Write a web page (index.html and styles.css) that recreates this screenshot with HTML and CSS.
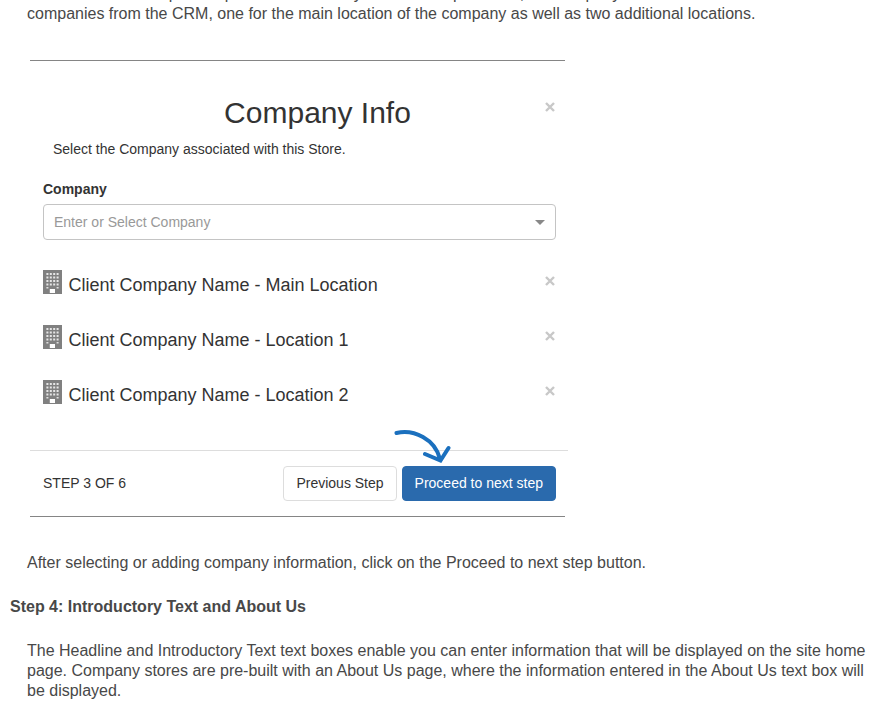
FILE: index.html
```html
<!DOCTYPE html>
<html lang="en">
<head>
    <meta charset="UTF-8">
    <meta name="viewport" content="width=device-width, initial-scale=1.0">
    <title>Company Store Setup</title>
    <link rel="stylesheet" href="styles.css">
</head>
<body>
<svg width="0" height="0" class="symbols">
    <symbol id="building" viewBox="0 0 19 24">
        <path fill="#808080" d="M0 0h19v24h-19z"/>
        <path stroke="#e6e6e6" stroke-width="2" stroke-dasharray="2 1.4" d="M3.4 4h12.4M3.4 7.5h12.4M3.4 11h12.4M3.4 14.5h12.4"/>
        <path fill="#ddd" d="M3.4 17h2v1.6h-2zM13.6 17h2v1.6h-2z"/>
        <path fill="#fff" d="M6.8 19h5.2v4h-5.2z"/>
    </symbol>
    <symbol id="close" viewBox="0 0 10 10">
        <path stroke="#c8c8c8" stroke-width="2.4" d="M1 1l8 8M9 1l-8 8"/>
    </symbol>
</svg>

<p class="intro">You can select multiple companies if necessary. In the example below, the company has been associated with three companies from the CRM, one for the main location of the company as well as two additional locations.</p>

<div class="modal">
    <div class="modal-header">
        <h2>Company Info</h2>
        <svg class="close"><use href="#close"/></svg>
    </div>
    <div class="modal-body">
        <p class="hint">Select the Company associated with this Store.</p>
        <div class="label">Company</div>
        <div class="select">
            <span>Enter or Select Company</span>
            <span class="caret"></span>
        </div>
        <ul class="companies">
            <li>
                <svg class="building"><use href="#building"/></svg>
                <span class="name">Client Company Name - Main Location</span>
                <svg class="close"><use href="#close"/></svg>
            </li>
            <li>
                <svg class="building"><use href="#building"/></svg>
                <span class="name">Client Company Name - Location 1</span>
                <svg class="close"><use href="#close"/></svg>
            </li>
            <li>
                <svg class="building"><use href="#building"/></svg>
                <span class="name">Client Company Name - Location 2</span>
                <svg class="close"><use href="#close"/></svg>
            </li>
        </ul>
    </div>
    <div class="modal-footer">
        <span class="step">STEP 3 OF 6</span>
        <button class="btn">Previous Step</button>
        <button class="btn primary">Proceed to next step</button>
        <svg class="arrow" viewBox="0 0 60 36">
            <path d="M3.500 5C21 1 42 11 47 31M32 26L47.500 32.500L55.500 20"/>
        </svg>
    </div>
</div>

<p class="after">After selecting or adding company information, click on the Proceed to next step button.</p>
<h3>Step 4: Introductory Text and About Us</h3>
<p>The Headline and Introductory Text text boxes enable you can enter information that will be displayed on the site home page. Company stores are pre-built with an About Us page, where the information entered in the About Us text box will be displayed.</p>
</body>
</html>
```
FILE: styles.css
```css
html {
    overflow: hidden;
}

body {
    margin: 0;
    padding: 0 24px 0 27px;
    font-family: "Liberation Sans", Arial, sans-serif;
    font-size: 16px;
    line-height: 20px;
    color: #484848;
    background: #fff;
}

p {
    margin: 0;
}

.symbols {
    display: block;
}

/* first line is scrolled partly out of view */
.intro {
    margin-top: -16px;
}

.modal {
    width: 535px;
    margin: 36px 0 0 3px;
    border-top: 1px solid #858585;
    border-bottom: 1px solid #858585;
    font-size: 14px;
    color: #333;
}

.modal-header {
    display: flex;
    align-items: flex-start;
    padding: 34px 10px 0 20px;
}

.modal-header h2 {
    flex: 1;
    margin: 0;
    padding-left: 40px;
    font-size: 30px;
    font-weight: normal;
    line-height: 36px;
    text-align: center;
}

.modal-header .close {
    margin-top: 7px;
}

.close {
    width: 10px;
    height: 10px;
}

.modal-body {
    padding: 8px 9px 0 13px;
}

.hint {
    padding-left: 10px;
}

.label {
    margin-top: 20px;
    font-weight: bold;
}

.select {
    display: flex;
    align-items: center;
    justify-content: space-between;
    box-sizing: border-box;
    height: 36px;
    margin-top: 5px;
    padding: 0 10px;
    border: 1px solid #c4c4c4;
    border-radius: 4px;
    color: #999;
}

.caret {
    border: 5px solid transparent;
    border-top-color: #888;
    border-bottom: 0;
}

.companies {
    margin: 30px 0 0;
    padding: 0;
    list-style: none;
}

.companies li {
    display: flex;
    align-items: flex-start;
    height: 55px;
    padding-right: 1px;
}

.building {
    width: 19px;
    height: 24px;
}

.name {
    flex: 1;
    margin: 5px 0 0 6.5px;
    font-size: 18px;
}

.companies .close {
    margin-top: 6px;
}

.modal-footer {
    position: relative;
    display: flex;
    align-items: center;
    box-sizing: border-box;
    width: 538px;
    height: 66px;
    margin-top: 15px;
    padding: 0 12px 0 13px;
    border-top: 1px solid #ddd;
}

.step {
    flex: 1;
    padding-bottom: 2px;
}

.btn {
    height: 35px;
    margin: 0 0 0 5px;
    padding: 0 12px 2px;
    border: 1px solid #ddd;
    border-radius: 4px;
    font: inherit;
    color: #333;
    background: #fff;
}

.btn.primary {
    border-color: #2a6aad;
    color: #fff;
    background: #2a6aad;
}

/* hand-drawn pointer over the button */
.arrow {
    position: absolute;
    left: 363px;
    top: -23px;
    width: 60px;
    height: 36px;
    fill: none;
    stroke: #1b70be;
    stroke-width: 4;
    stroke-linecap: round;
}

.after {
    margin-top: 36px;
}

h3 {
    margin: 24px 0 24px -17px;
    font-size: 16px;
    line-height: 20px;
}
```
